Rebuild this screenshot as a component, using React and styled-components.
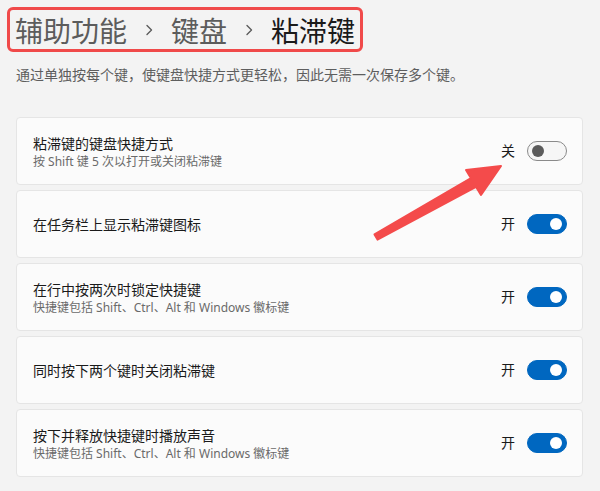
import React from 'react'
import styled, { createGlobalStyle } from 'styled-components';

const GlobalStyle = createGlobalStyle`
  html, body {
    margin: 0;
    padding: 0;
    background: #f3f3f3;
  }
  body {
    font-family: "Noto Sans", "Noto Sans CJK SC", sans-serif;
    color: #1b1b1b;
  }
`;

const Page = styled.div`
  position: relative;
  width: 600px;
  height: 491px;
  box-sizing: border-box;
  padding: 7px 17px 0 16px;
  display: flex;
  flex-direction: column;
  overflow: hidden;
`;

const Breadcrumb = styled.div`
  align-self: flex-start;
  margin-left: -9px;
  height: 45px;
  box-sizing: border-box;
  border: 3px solid #f04a4a;
  border-radius: 6px;
  padding: 0 5px 0 5px;
  display: flex;
  align-items: center;
  gap: 17px;
`;

const Crumb = styled.span`
  font-size: 28px;
  line-height: 36px;
  color: ${props => (props.current ? '#1a1a1a' : '#5c5c5c')};
  font-family: "Noto Sans CJK SC", sans-serif;
`;

const Description = styled.p`
  margin: 13px 0 0;
  font-size: 14px;
  line-height: 20px;
  color: #5e5e5e;
  font-family: "Noto Sans", "Noto Sans CJK SC", sans-serif;
`;

const List = styled.div`
  margin-top: 32px;
  display: flex;
  flex-direction: column;
  gap: 5px;
`;

const Card = styled.div`
  height: 68px;
  box-sizing: border-box;
  background: #fbfbfb;
  border: 1px solid #e5e5e5;
  border-radius: 4px;
  padding: 0 15px 0 16px;
  display: flex;
  align-items: center;
  justify-content: space-between;
`;

const Texts = styled.div`
  display: flex;
  flex-direction: column;
  padding-top: 2px;
`;

const Title = styled.div`
  font-size: 14px;
  line-height: 20px;
  color: #1a1a1a;
`;

const Subtitle = styled.div`
  font-size: 12px;
  line-height: 16px;
  color: #6a6a6a;
`;

const Control = styled.div`
  display: flex;
  align-items: center;
  gap: 12px;
`;

const State = styled.span`
  font-size: 14px;
  line-height: 20px;
  color: #1a1a1a;
`;

const Toggle = styled.div`
  width: 40px;
  height: 20px;
  box-sizing: border-box;
  border-radius: 10px;
  position: relative;
  background: ${props => (props.on ? '#0067c0' : '#f6f6f6')};
  border: 1px solid ${props => (props.on ? '#0067c0' : '#8a8a8a')};

  &::after {
    content: '';
    position: absolute;
    top: 3px;
    left: ${props => (props.on ? '22px' : '4px')};
    width: 12px;
    height: 12px;
    border-radius: 50%;
    background: ${props => (props.on ? '#ffffff' : '#5b5b5b')};
  }
`;

const Overlay = styled.svg`
  position: absolute;
  top: 0;
  left: 0;
  pointer-events: none;
`;

const Chevron = () => (
  <svg width="10" height="12" viewBox="0 0 10 12">
    <polyline points="3,1.5 7.5,6 3,10.5" fill="none" stroke="#5c5c5c" strokeWidth="1.4" strokeLinecap="round" strokeLinejoin="round" />
  </svg>
);

const settings = [
  { title: '粘滞键的键盘快捷方式', sub: '按 Shift 键 5 次以打开或关闭粘滞键', on: false },
  { title: '在任务栏上显示粘滞键图标', on: true },
  { title: '在行中按两次时锁定快捷键', sub: '快捷键包括 Shift、Ctrl、Alt 和 Windows 徽标键', on: true },
  { title: '同时按下两个键时关闭粘滞键', on: true },
  { title: '按下并释放快捷键时播放声音', sub: '快捷键包括 Shift、Ctrl、Alt 和 Windows 徽标键', on: true },
];

const App = () => (
  <Page>
    <GlobalStyle />
    <Breadcrumb>
      <Crumb>辅助功能</Crumb>
      <Chevron />
      <Crumb>键盘</Crumb>
      <Chevron />
      <Crumb current>粘滞键</Crumb>
    </Breadcrumb>
    <Description>通过单独按每个键，使键盘快捷方式更轻松，因此无需一次保存多个键。</Description>
    <List>
      {settings.map(s => (
        <Card key={s.title}>
          <Texts>
            <Title>{s.title}</Title>
            {s.sub && <Subtitle>{s.sub}</Subtitle>}
          </Texts>
          <Control>
            <State>{s.on ? '开' : '关'}</State>
            <Toggle on={s.on} />
          </Control>
        </Card>
      ))}
    </List>
    {/* red annotation arrow */}
    <Overlay width="600" height="491" viewBox="0 0 600 491">
      <polygon
        points="374.5,234.4 471,178.2 466,170 501,166 481,195 476,186.8 377.5,239.6"
        fill="#f44b4b"
        stroke="#f44b4b"
        strokeWidth="2"
        strokeLinejoin="round"
      />
    </Overlay>
  </Page>
);

export default App;
